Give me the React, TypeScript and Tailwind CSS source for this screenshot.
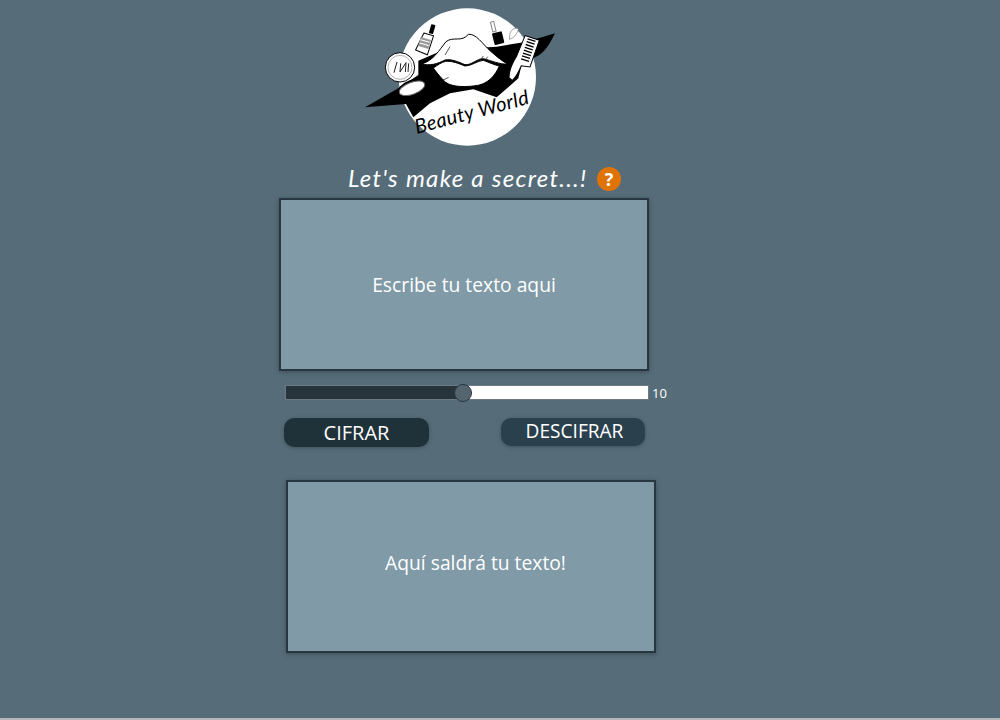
function Logo() {
  return (
    <svg viewBox="0 0 660 450" className="ml-[71px] h-[150px] w-[220px] shrink-0">
      <circle cx="352" cy="231" r="206" fill="#fff" />
      {/* swoosh */}
      <path d="M45 322 L150 262 L205 225 L205 182 L280 150 L440 140 L530 125 L615 100 C600 130 585 160 555 172 L515 195 L505 235 L440 292 L370 268 L300 280 L240 310 L190 352 L168 312 Z" fill="#000" />
      {/* lips */}
      <path d="M215 192 C250 182 268 150 288 125 C310 108 335 128 355 103 C378 100 398 132 420 152 C436 166 452 180 472 192 C450 194 425 182 400 176 C380 176 365 196 345 194 C325 186 305 176 285 180 C262 192 240 198 215 192 Z" fill="#fff" stroke="#000" strokeWidth="3" />
      <path d="M250 204 C262 196 275 186 287 184 C305 182 325 190 345 198 C365 198 382 182 400 181 C415 186 430 194 448 198 C436 225 415 255 370 258 C335 262 295 260 280 240 C268 228 258 215 250 204 Z" fill="#fff" stroke="#000" strokeWidth="3" />
      <path d="M280 240 L296 232 M395 175 L400 168 M408 177 L413 170 M300 140 L285 165" stroke="#000" strokeWidth="2" fill="none" />
      {/* bottle */}
      <g transform="rotate(16 222 120)">
        <rect x="230" y="68" width="13" height="28" rx="2" fill="#000" />
        <path d="M216 100 L246 100 L244 160 L206 156 Z" fill="#fff" stroke="#000" strokeWidth="3" />
        <rect x="210" y="114" width="32" height="28" fill="#999" />
        <path d="M212 122 L240 122 M212 132 L240 132" stroke="#fff" strokeWidth="3" />
      </g>
      {/* polish */}
      <g transform="rotate(-14 445 100)">
        <path d="M430 62 L440 62 L440 92 L430 92 Z" fill="#fff" stroke="#888" strokeWidth="3" />
        <rect x="426" y="96" width="30" height="36" rx="3" fill="#000" />
      </g>
      <path d="M480 100 C485 85 500 82 505 88 C500 105 490 115 478 118 Z" fill="#fff" stroke="#777" strokeWidth="2" />
      {/* comb */}
      <g transform="rotate(18 510 170)">
        <path d="M498 240 C490 215 495 190 500 170 L505 105 L550 105 L548 190 L522 195 C520 215 518 230 510 245 Z" fill="#fff" stroke="#000" strokeWidth="3" />
        <path d="M515 112 L540 112 M515 121 L540 121 M515 130 L540 130 M515 139 L540 139 M515 148 L540 148 M515 157 L540 157 M515 166 L540 166 M515 175 L540 175" stroke="#000" strokeWidth="4" />
      </g>
      {/* compact */}
      <circle cx="150" cy="202" r="44" fill="#fff" stroke="#000" strokeWidth="3" />
      <circle cx="150" cy="202" r="36" fill="#fff" stroke="#888" strokeWidth="2" />
      <path d="M132 218 L141 186 M152 190 L150 216 L168 188 L166 216 M176 190 L174 216" stroke="#222" strokeWidth="3" fill="none" />
      <ellipse cx="188" cy="265" rx="48" ry="26" transform="rotate(-20 188 265)" fill="#000" />
      <ellipse cx="186" cy="265" rx="40" ry="18" transform="rotate(-20 186 265)" fill="#fff" stroke="#666" strokeWidth="3" />
      {/* name */}
      <text x="200" y="402" textLength="352" transform="rotate(-15 200 402)" className="fill-black font-['Lato',sans-serif] text-[60px] italic">Beauty World</text>
    </svg>
  )
}

function TextBox({ label, className }: { label: string; className: string }) {
  return (
    <div className={`flex h-[173px] w-[370px] items-center justify-center border-2 border-[#28373f] bg-[#809aa7] text-[19.3px] text-white shadow-[0_1px_5px_rgba(0,0,0,0.3)] ${className}`}>
      {label}
    </div>
  )
}

export default function App() {
  return (
    <div className="flex h-[720px] flex-col border-b-2 border-[#b4b8ba] bg-[#566d79] pl-[279px] font-['Open_Sans',sans-serif]">
      <Logo />

      <div className="flex h-[48px] items-center pl-[69px] pt-[8px]">
        <span className="w-[249px] font-['Lato',sans-serif] text-[24px] tracking-[1.3px] text-white italic">Let's make a secret...!</span>
        <span className="mt-[2px] flex h-[24px] w-[24px] items-center justify-center rounded-full bg-[#e07306] text-[18px] font-bold text-white">?</span>
      </div>

      <TextBox label="Escribe tu texto aqui" className="pt-[2px]" />

      <div className="mt-[14px] ml-[6px] flex h-[15px] items-center">
        <div className="relative flex h-[15px] w-[364px] border border-[#6b7a83] bg-white">
          <div className="w-[177px] bg-[#28343b]" />
          <div className="absolute top-[-2px] left-[168px] h-[18px] w-[18px] rounded-full border border-[#28343b] bg-[#55656f]" />
        </div>
        <span className="ml-[3px] mt-[2px] text-[13px] text-white">10</span>
      </div>

      <div className="mt-[18px] ml-[5px] flex w-[361px] justify-between">
        <button className="h-[29px] w-[145px] rounded-[10px] bg-[#1f323a] text-[20px] leading-none text-white shadow-[0_1px_4px_rgba(0,0,0,0.25)]">CIFRAR</button>
        <button className="h-[28px] w-[144px] rounded-[10px] bg-[#2a414d] pl-[3px] text-[19.1px] leading-none text-white shadow-[0_1px_4px_rgba(0,0,0,0.25)]">DESCIFRAR</button>
      </div>

      <TextBox label="Aquí saldrá tu texto!" className="mt-[33px] ml-[7px] pb-[6px] pl-[9px]" />
    </div>
  )
}
